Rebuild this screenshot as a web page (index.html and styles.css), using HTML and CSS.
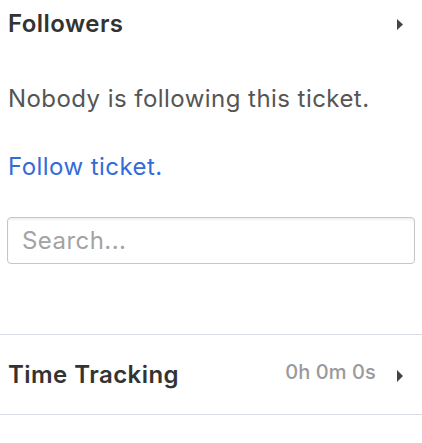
FILE: index.html
```html
<!DOCTYPE html>
<html lang="en">
<head>
<meta charset="utf-8">
<title>Ticket sidebar</title>
<link rel="stylesheet" href="styles.css">
</head>
<body>
<section class="followers">
  <div class="section-head">
    <h2 class="section-title">Followers</h2>
    <svg class="chevron" width="6" height="11" viewBox="0 0 6 11" aria-hidden="true"><path d="M0 0L6 5.5L0 11Z"/></svg>
  </div>
  <p class="empty-note">Nobody is following this ticket.</p>
  <a class="follow-link" href="#">Follow ticket.</a>
  <input class="search" type="text" placeholder="Search...">
</section>
<section class="time-row">
  <h2 class="section-title">Time Tracking</h2>
  <div class="time-meta">
    <span class="time-value">0h 0m 0s</span>
    <svg class="chevron chevron-lg" width="6" height="12" viewBox="0 0 6 12" aria-hidden="true"><path d="M0 0L6 6L0 12Z"/></svg>
  </div>
</section>
</body>
</html>
```
FILE: styles.css
```css
* { box-sizing: border-box; }
body {
  margin: 0;
  background: #fff;
  font-family: Inter, "Open Sans", sans-serif;
  font-size: 24px;
  line-height: 30px;
  letter-spacing: 0.45px;
  color: #333;
}
.followers {
  display: flex;
  flex-direction: column;
  padding: 9px 19px 70px 8px;
}
.section-head {
  display: flex;
  justify-content: space-between;
  align-items: center;
}
.section-title {
  margin: 0;
  font-size: 24px;
  font-weight: 600;
  line-height: 30px;
  color: #333;
}
.chevron { fill: #444; flex: none; }
.empty-note {
  margin: 45px 0 0;
  color: #555;
}
.follow-link {
  margin-top: 38px;
  color: #326cd8;
  text-decoration: none;
  align-self: flex-start;
}
.search {
  margin: 35px -12px 0 -1px;
  height: 47px;
  padding: 0 14px;
  border: 1px solid #c6c6c6;
  border-radius: 4px;
  box-shadow: inset 0 2px 2px rgba(0,0,0,0.06);
  font-family: inherit;
  font-size: 24px;
  letter-spacing: 0.45px;
  color: #333;
  outline: none;
}
.search::placeholder { color: #a3a3a3; }
.time-row {
  display: flex;
  justify-content: space-between;
  align-items: center;
  height: 81px;
  padding: 0 19px 0 8px;
  border-top: 1px solid #d9dde4;
  border-bottom: 1px solid #d9dde4;
}
.time-meta {
  display: flex;
  align-items: center;
  gap: 21px;
}
.time-value {
  font-size: 20px;
  font-weight: 500;
  color: #9a9a9a;
  letter-spacing: 0.1px;
  margin-bottom: 6px;
}
.chevron-lg { margin-top: 2px; }
```
